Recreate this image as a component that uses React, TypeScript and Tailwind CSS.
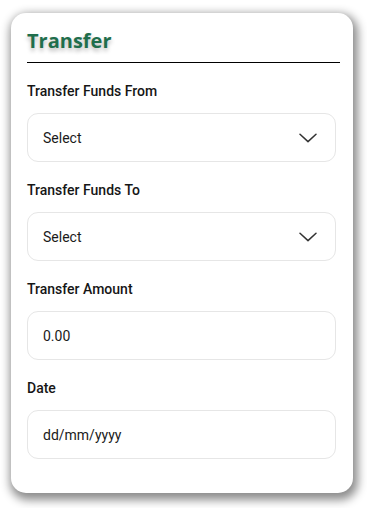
import React from "react";

function Chevron() {
  return (
    <svg width="18" height="10" viewBox="0 0 18 10" fill="none" className="shrink-0">
      <path d="M1 1.2 L9 8.6 L17 1.2" stroke="#333" strokeWidth="1.5" strokeLinecap="round" strokeLinejoin="round" />
    </svg>
  );
}

function Field({ label, value, select }: { label: string; value: string; select?: boolean }) {
  return (
    <div className="flex flex-col">
      <div className="text-[14px] leading-[18px] font-medium text-[#161616]">{label}</div>
      <div className="mt-[13px] h-[49px] w-[309px] rounded-[11px] border border-[#e6e6e6] bg-white flex items-center justify-between pl-[15px] pr-[18px]">
        <span className="text-[14px] leading-[18px] pt-px text-[#1a1a1a]">{value}</span>
        {select && <Chevron />}
      </div>
    </div>
  );
}

export default function App() {
  return (
    <div className="min-h-[508px] w-[367px] bg-white pt-[13px] pl-[11px]" style={{ fontFamily: "Roboto, 'Liberation Sans', sans-serif" }}>
      <div className="w-[342px] h-[480px] rounded-[15px] bg-white shadow-[2px_4px_10px_3px_rgba(0,0,0,0.45)] pl-[16px] pr-[13px] pt-[14px]">
        <div
          className="text-[20px] leading-[28px] font-bold text-[#1f6e4c] [text-shadow:0_3px_4px_rgba(0,0,0,0.28)]"
          style={{ fontFamily: "'Open Sans', 'Liberation Sans', sans-serif" }}
        >
          Transfer
        </div>
        <div className="mt-[7px] h-px bg-black" />
        <div className="mt-[19px] flex flex-col gap-[19px]">
          <Field label="Transfer Funds From" value="Select" select />
          <Field label="Transfer Funds To" value="Select" select />
          <Field label="Transfer Amount" value="0.00" />
          <Field label="Date" value="dd/mm/yyyy" />
        </div>
      </div>
    </div>
  );
}
